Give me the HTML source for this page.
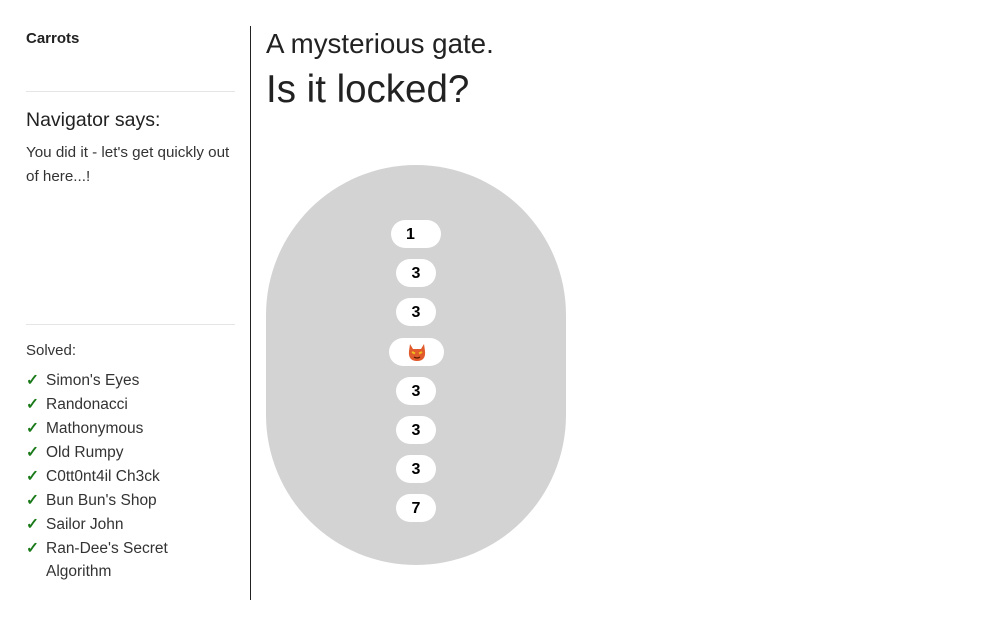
<!DOCTYPE html>
<html><head><meta charset="utf-8"><style>
body{margin:0;background:#fff;font-family:"Liberation Sans",sans-serif;color:#222;width:982px;height:626px;position:relative;overflow:hidden}
.a{position:absolute}
.pill{position:absolute;background:#fff;border-radius:14px;height:28px;font-weight:bold;font-size:16px;line-height:30px;text-align:center;color:#000}
.li{position:absolute;left:26px;font-size:15.5px;color:#333}
.li b{color:#1a7a1a;font-weight:bold;display:inline-block;width:20px}
</style></head><body>
<div class="a" style="left:26px;top:30px;font-size:15px;font-weight:bold">Carrots</div>
<div class="a" style="left:26px;top:91px;width:209px;border-top:1px solid #e5e5e5"></div>
<div class="a" style="left:26px;top:109px;font-size:19.5px">Navigator says:</div>
<div class="a" style="left:26px;top:141px;width:260px;font-size:15.2px;line-height:24px;color:#333">You did it - let's get quickly out<br>of here...!</div>
<div class="a" style="left:26px;top:324px;width:209px;border-top:1px solid #e5e5e5"></div>
<div class="a" style="left:26px;top:342px;font-size:15px;color:#333">Solved:</div>
<div class="li" style="top:371px"><b>✓</b>Simon's Eyes</div>
<div class="li" style="top:395px"><b>✓</b>Randonacci</div>
<div class="li" style="top:419px"><b>✓</b>Mathonymous</div>
<div class="li" style="top:443px"><b>✓</b>Old Rumpy</div>
<div class="li" style="top:467px"><b>✓</b>C0tt0nt4il Ch3ck</div>
<div class="li" style="top:491px"><b>✓</b>Bun Bun's Shop</div>
<div class="li" style="top:515px"><b>✓</b>Sailor John</div>
<div class="li" style="top:539px"><b>✓</b>Ran-Dee's Secret</div>
<div class="li" style="top:563px"><b></b>Algorithm</div>
<div class="a" style="left:250px;top:26px;width:1px;height:574px;background:#222"></div>
<div class="a" style="left:266px;top:28px;font-size:27.7px;color:#222">A mysterious gate.</div>
<div class="a" style="left:266px;top:68px;font-size:38.5px;color:#222">Is it locked?</div>
<div class="a" style="left:266px;top:165px;width:300px;height:400px;border-radius:150px;background:#d3d3d3"></div>
<div class="pill" style="left:391px;top:220px;width:50px;text-align:left;padding-left:15px;box-sizing:border-box">1</div>
<div class="pill" style="left:396px;top:259px;width:40px">3</div>
<div class="pill" style="left:396px;top:298px;width:40px">3</div>
<div class="pill" style="left:389px;top:338px;width:55px">
<svg width="22" height="22" viewBox="0 0 22 22" style="margin-top:3px"><path d="M4 3 L7 8 L15 8 L18 3 L19 10 Q20 20 11 20 Q2 20 3 10Z" fill="#e05a2b"/><path d="M6 11 L9 12.5 M16 11 L13 12.5" stroke="#f0c020" stroke-width="2"/><path d="M8 16 Q11 18 14 16" stroke="#5a1a00" stroke-width="1.2" fill="none"/></svg></div>
<div class="pill" style="left:396px;top:377px;width:40px">3</div>
<div class="pill" style="left:396px;top:416px;width:40px">3</div>
<div class="pill" style="left:396px;top:455px;width:40px">3</div>
<div class="pill" style="left:396px;top:494px;width:40px">7</div>
</body></html>
